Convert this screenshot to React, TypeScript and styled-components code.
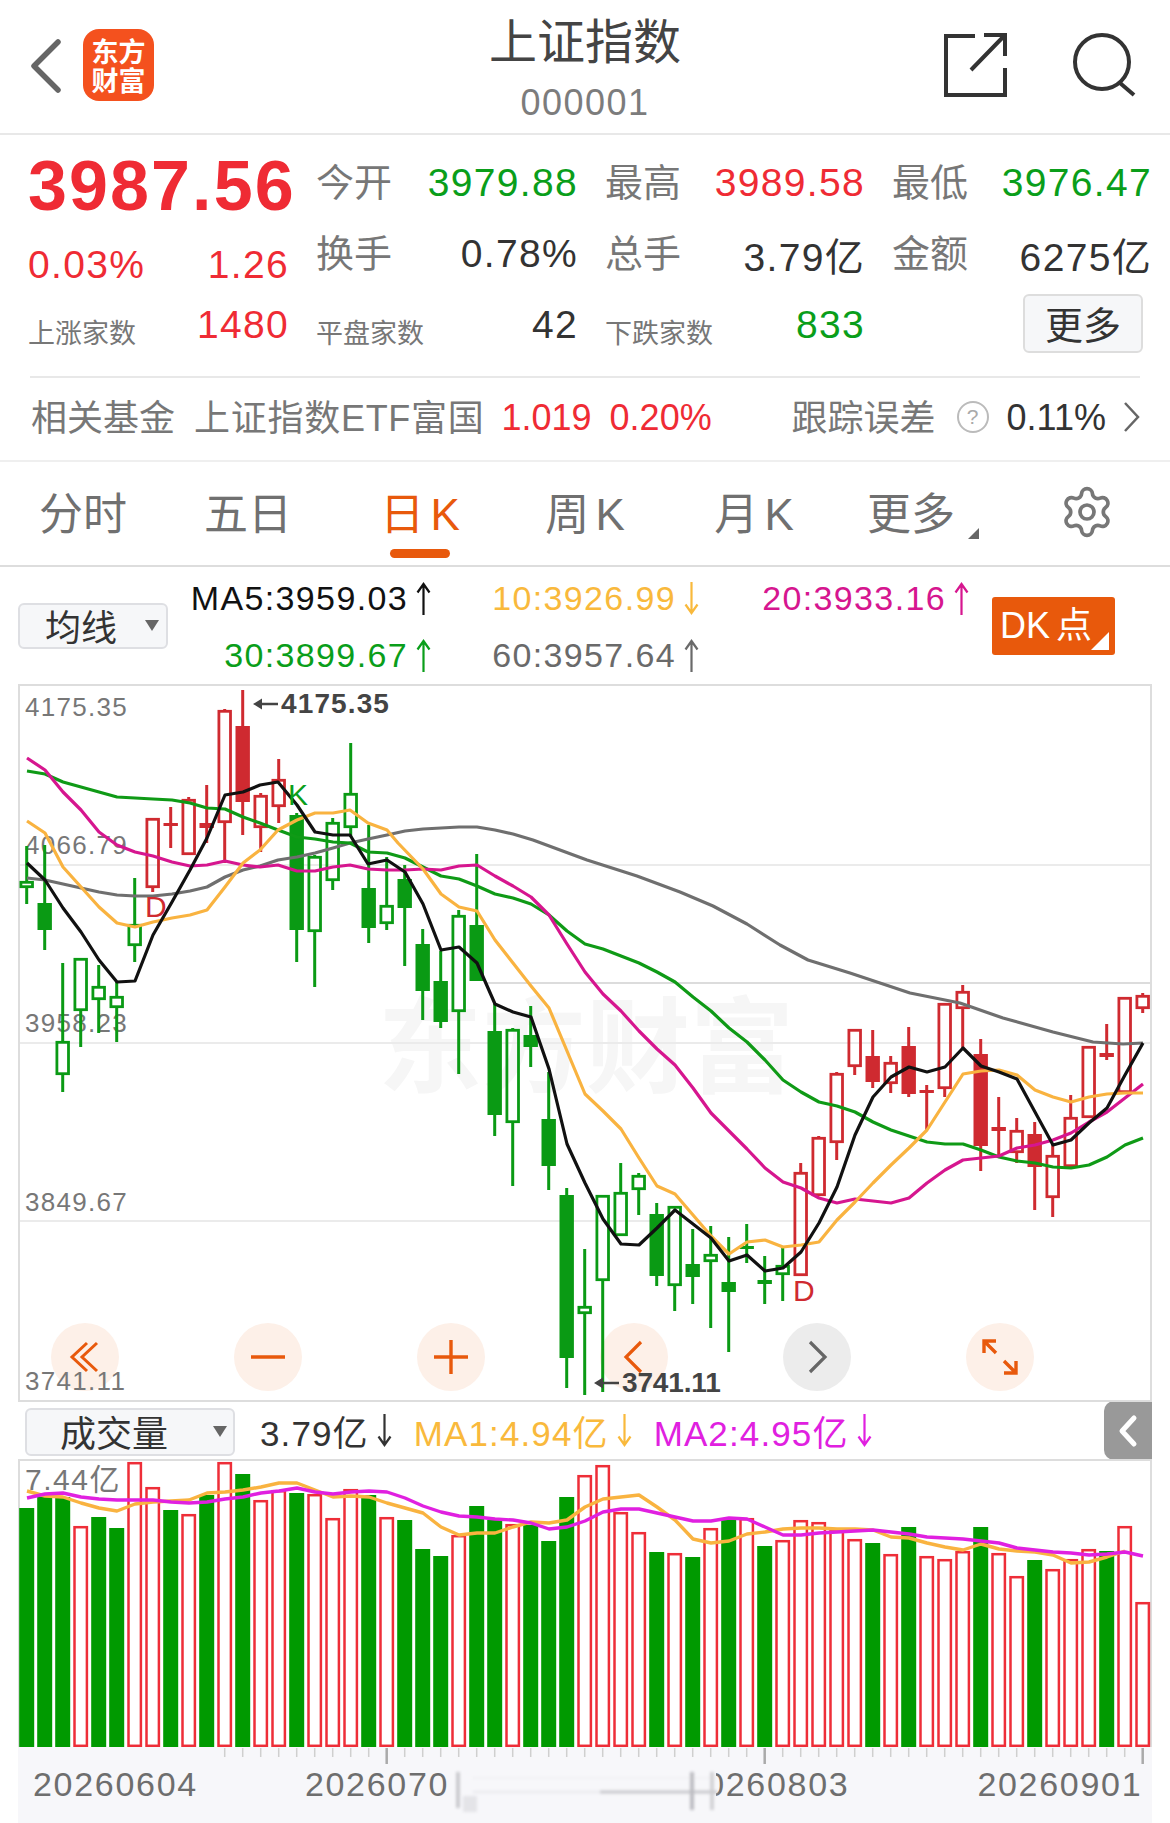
import React from "react";
import styled, { createGlobalStyle } from "styled-components";
import { Settings } from "lucide-react";

const RED = "#ef2b34";
const GREEN = "#0a9e1a";
const ORANGE = "#e8590c";
const FONT = `"Liberation Sans", "Noto Sans CJK SC", sans-serif`;

const Global = createGlobalStyle`
  html, body { margin: 0; padding: 0; background: #fff; }
  body { font-family: ${FONT}; }
  * { box-sizing: border-box; }
`;

const Page = styled.div`
  width: 1170px;
  height: 1823px;
  overflow: hidden;
  background: #fff;
  color: #333;
`;

/* ---------- header ---------- */
const Header = styled.header`
  height: 135px;
  border-bottom: 2px solid #e8e8e8;
  display: grid;
  grid-template-columns: 1fr auto 1fr;
`;
const HeaderLeft = styled.div`
  display: flex;
  align-items: flex-start;
  padding: 29px 0 0 30px;
  gap: 20px;
`;
const BackIcon = styled.svg`
  width: 33px;
  height: 71px;
  display: block;
`;
const Logo = styled.div`
  width: 71px;
  height: 72px;
  border-radius: 16px;
  background: #f4511e;
  color: #fff;
  font-family: "Noto Sans CJK SC", sans-serif;
  font-weight: 700;
  font-size: 27px;
  line-height: 29px;
  text-align: center;
  padding-top: 7px;
`;
const TitleBlock = styled.div`
  text-align: center;
`;
const Title = styled.div`
  font-family: "Noto Sans CJK SC", sans-serif;
  font-size: 48px;
  line-height: 64px;
  margin-top: 6px;
  color: #444;
`;
const Code = styled.div`
  font-size: 36px;
  line-height: 40px;
  margin-top: 13px;
  color: #7c7c7c;
  letter-spacing: 0.04em;
`;
const HeaderRight = styled.div`
  display: flex;
  justify-content: flex-end;
  align-items: flex-start;
  padding: 32px 32px 0 0;
  gap: 64px;
`;
const TopIcon = styled.svg`
  width: 66px;
  height: 66px;
  display: block;
`;

/* ---------- quote ---------- */
const QuoteGrid = styled.section`
  display: grid;
  grid-template-columns: 261px 262px 260px 260px;
  column-gap: 27px;
  grid-template-rows: 66px 76px 66px;
  padding: 15px 0 0 28px;
  height: 241px;
`;
const Cell = styled.div`
  display: flex;
  justify-content: space-between;
  align-items: center;
`;
const OffsetCell = styled(Cell)`
  padding-top: 22px;
`;
const Price = styled.div`
  font-size: 70px;
  font-weight: 700;
  line-height: 68px;
  letter-spacing: 0.03em;
  color: ${RED};
  padding-top: 6px;
  white-space: nowrap;
`;
const Label = styled.span`
  font-family: "Noto Sans CJK SC", sans-serif;
  font-size: 38px;
  color: #777;
  padding-bottom: 8px;
  white-space: nowrap;
`;
const SmallLabel = styled.span`
  font-family: "Noto Sans CJK SC", sans-serif;
  font-size: 27px;
  color: #777;
  padding-top: 12px;
  white-space: nowrap;
`;
const Value = styled.span<{ $tone?: string }>`
  font-size: 39px;
  letter-spacing: 0.034em;
  color: ${(p) => p.$tone || "#333"};
  white-space: nowrap;
`;
const MoreButton = styled.button`
  margin: 0 9px 4px auto;
  width: 120px;
  height: 59px;
  border: 2px solid #ddd;
  border-radius: 6px;
  background: #f6f7f9;
  font-family: "Noto Sans CJK SC", sans-serif;
  font-size: 38px;
  color: #333;
  padding: 0;
  line-height: 1;
`;
const Divider = styled.div`
  height: 2px;
  margin: 0 30px;
  background: #e8e8e8;
`;

/* ---------- fund ---------- */
const FundRow = styled.section`
  height: 84px;
  border-bottom: 2px solid #efefef;
  display: flex;
  align-items: center;
  padding: 0 30px 4px 31px;
`;
const FundText = styled.span<{ $gap?: number; $spread?: boolean }>`
  font-size: 36px;
  margin-left: ${(p) => p.$gap || 0}px;
  letter-spacing: ${(p) => (p.$spread ? "0.02em" : "0")};
  padding-bottom: 4px;
  color: #777;
  white-space: nowrap;
`;
const FundNum = styled.span<{ $gap: number; $tone: string }>`
  font-size: 36px;
  margin-left: ${(p) => p.$gap}px;
  padding-top: 2px;
  color: ${(p) => p.$tone};
  white-space: nowrap;
`;
const Spacer = styled.div`
  flex: 1;
`;
const HelpMark = styled.span`
  margin-left: 21px;
  width: 32px;
  height: 32px;
  border-radius: 50%;
  border: 2px solid #bbb;
  color: #aaa;
  font-size: 21px;
  line-height: 28px;
  text-align: center;
`;
const Chevron = styled.svg`
  display: block;
  margin-left: 17px;
  width: 17px;
  height: 32px;
`;

/* ---------- tabs ---------- */
const Tabs = styled.nav`
  height: 105px;
  border-bottom: 2px solid #ddd;
  display: grid;
  grid-template-columns: 166px 164px 180px 150px 188px 126px 1fr;
`;
const Tab = styled.div<{ $active?: boolean }>`
  display: flex;
  flex-direction: column;
  align-items: center;
  padding-top: 23px;
  font-family: ${FONT};
  font-size: 44px;
  line-height: 60px;
  color: ${(p) => (p.$active ? ORANGE : "#707070")};
  white-space: nowrap;
`;
const TabLabel = styled.span`
  position: relative;
  word-spacing: -6px;
`;
const CornerMark = styled.i<{ $color: string; $size: number; $right: number; $bottom: number }>`
  position: absolute;
  right: ${(p) => p.$right}px;
  bottom: ${(p) => p.$bottom}px;
  width: ${(p) => p.$size}px;
  height: ${(p) => p.$size}px;
  background: ${(p) => p.$color};
  clip-path: polygon(100% 0, 100% 100%, 0 100%);
`;
const Underline = styled.i`
  width: 60px;
  height: 9px;
  border-radius: 5px;
  background: ${ORANGE};
  margin-top: 4px;
`;
const GearCell = styled.div`
  padding: 22px 0 0 85px;
  color: #777;
`;

/* ---------- MA ---------- */
const MaPanel = styled.section`
  height: 117px;
  display: flex;
  align-items: flex-start;
`;
const Select = styled.div<{ $width: number; $height: number; $left: number; $top: number; $size: number; $pad: number; $tri: number }>`
  position: relative;
  width: ${(p) => p.$width}px;
  height: ${(p) => p.$height}px;
  margin: ${(p) => p.$top}px 0 0 ${(p) => p.$left}px;
  padding-left: ${(p) => p.$pad}px;
  border: 2px solid #dedfe3;
  border-radius: 6px;
  background: #f6f7f9;
  font-family: "Noto Sans CJK SC", sans-serif;
  font-size: ${(p) => p.$size}px;
  line-height: ${(p) => p.$height - 6}px;
  color: #333;
  flex: none;
  &::after {
    content: "";
    position: absolute;
    right: ${(p) => p.$tri}px;
    top: 50%;
    margin-top: -6px;
    border-left: 7px solid transparent;
    border-right: 7px solid transparent;
    border-top: 11px solid #666;
  }
`;
const MaGrid = styled.div`
  display: grid;
  grid-template-columns: 263px 268px 270px;
  grid-auto-rows: 57px;
  padding-top: 3px;
`;
const MaItem = styled.div<{ $color: string }>`
  display: flex;
  align-items: center;
  justify-content: flex-end;
  gap: 8px;
  font-size: 34px;
  letter-spacing: 0.04em;
  color: ${(p) => p.$color};
  white-space: nowrap;
`;
const ArrowSvg = styled.svg`
  display: block;
  flex: none;
  width: 15px;
  height: 33px;
`;
const DkButton = styled.div`
  position: relative;
  margin: 30px 0 0 23px;
  width: 123px;
  height: 58px;
  background: ${ORANGE};
  border-radius: 3px;
  color: #fff;
  font-size: 36px;
  line-height: 58px;
  padding-left: 8px;
  white-space: nowrap;
  word-spacing: -4px;
`;

/* ---------- chart ---------- */
const ChartBox = styled.section`
  position: relative;
  margin-left: 18px;
  width: 1134px;
  height: 718px;
  border: 2px solid #ddd;
`;
const ChartSvg = styled.svg`
  position: relative;
  display: block;
  overflow: visible;
`;
const Watermark = styled.div`
  position: absolute;
  left: 358px;
  top: 294px;
  font-family: "Noto Sans CJK SC", sans-serif;
  font-size: 104px;
  font-weight: 700;
  line-height: 120px;
  color: #f6f6f6;
  white-space: nowrap;
`;
const AxisLabel = styled.span<{ $top: number }>`
  position: absolute;
  left: 5px;
  top: ${(p) => p.$top}px;
  font-size: 26px;
  line-height: 30px;
  letter-spacing: 0.05em;
  color: #777;
`;
const Extreme = styled.span<{ $left: number; $top: number; $spacing: string }>`
  position: absolute;
  left: ${(p) => p.$left}px;
  top: ${(p) => p.$top}px;
  display: flex;
  align-items: center;
  gap: 3px;
  font-size: 28px;
  font-weight: 700;
  line-height: 30px;
  letter-spacing: ${(p) => p.$spacing};
  color: #444;
  white-space: nowrap;
`;
const Mark = styled.span<{ $left: number; $top: number; $color: string }>`
  position: absolute;
  left: ${(p) => p.$left}px;
  top: ${(p) => p.$top}px;
  font-size: 30px;
  line-height: 30px;
  color: ${(p) => p.$color};
`;
const Controls = styled.div`
  position: absolute;
  left: 31px;
  top: 637px;
  display: flex;
  gap: 115px;
`;
const Round = styled.div<{ $gray?: boolean }>`
  width: 68px;
  height: 68px;
  border-radius: 50%;
  background: ${(p) => (p.$gray ? "#ececec" : "#fdf0e8")};
  display: flex;
  align-items: center;
  justify-content: center;
`;
const RoundIcon = styled.svg`
  display: block;
  width: 40px;
  height: 40px;
`;
const SmallArrow = styled.svg`
  display: block;
  flex: none;
  width: 25px;
  height: 14px;
`;

/* ---------- volume ---------- */
const VolHeader = styled.section`
  height: 57px;
  margin-right: 18px;
  display: flex;
  align-items: flex-start;
`;
const VolText = styled.div<{ $color: string; $gap: number }>`
  display: flex;
  align-items: center;
  gap: 8px;
  height: 57px;
  margin-left: ${(p) => p.$gap}px;
  font-size: 35px;
  letter-spacing: 0.032em;
  color: ${(p) => p.$color};
  white-space: nowrap;
`;
const Collapse = styled.div`
  margin-left: auto;
  width: 48px;
  height: 59px;
  border-radius: 10px 0 0 10px;
  background: #999;
  margin-top: -1px;
  display: flex;
  align-items: center;
  justify-content: center;
`;
const VolBox = styled.section`
  position: relative;
  margin-left: 18px;
  width: 1134px;
  height: 288px;
  border: 2px solid #ddd;
  border-bottom: 0;
`;
const VolPeak = styled.span`
  position: absolute;
  left: 5px;
  top: 2px;
  font-size: 30px;
  line-height: 34px;
  letter-spacing: 0.05em;
  color: #777;
`;

/* ---------- axis ---------- */
const AxisBar = styled.footer`
  position: relative;
  margin-left: 18px;
  width: 1134px;
  height: 76px;
  background: #f7f7fa;
  padding: 20px 0 0 15px;
  display: flex;
  font-size: 34px;
  line-height: 34px;
  letter-spacing: 0.05em;
  color: #6e6e6e;
`;
const Ticks = styled.svg`
  position: absolute;
  left: 0;
  top: 0;
`;
const DateText = styled.span<{ $gap?: number }>`
  margin-left: ${(p) => p.$gap || 0}px;
  white-space: nowrap;
`;
const Smudge = styled.svg`
  position: absolute;
  left: 0;
  top: 0;
`;

/* ---------- data ---------- */
type C = [number, number, number, number, "g" | "r", 0 | 1];
// wickTop, bodyTop, bodyBottom, wickBottom, colour, solid
const candles: C[] = [
  [846, 881, 888, 904, "g", 0], [845, 903, 930, 950, "g", 1], [963, 1041, 1075, 1092, "g", 0],
  [958, 958, 1011, 1047, "g", 0], [965, 986, 1000, 1033, "g", 0], [982, 996, 1008, 1042, "g", 0],
  [878, 924, 946, 962, "g", 0], [818, 818, 888, 892, "r", 0], [807, 823, 826, 848, "r", 1],
  [797, 799, 855, 855, "r", 0], [785, 823, 828, 843, "r", 1], [709, 710, 823, 863, "r", 0],
  [690, 726, 802, 835, "r", 1], [793, 795, 828, 852, "r", 0], [759, 779, 807, 823, "r", 0],
  [813, 815, 930, 962, "g", 1], [855, 856, 932, 987, "g", 0], [818, 822, 881, 890, "g", 0],
  [743, 793, 828, 837, "g", 0], [825, 888, 928, 943, "g", 1], [857, 905, 924, 930, "g", 0],
  [865, 879, 908, 966, "g", 1], [929, 944, 991, 1020, "g", 1], [951, 981, 1022, 1028, "g", 1],
  [910, 915, 1012, 1074, "g", 0], [854, 925, 981, 981, "g", 1], [1004, 1031, 1115, 1136, "g", 1],
  [1028, 1029, 1123, 1186, "g", 0], [1006, 1035, 1047, 1067, "g", 1], [1072, 1119, 1166, 1190, "g", 1],
  [1188, 1195, 1358, 1388, "g", 1], [1249, 1306, 1314, 1395, "g", 0], [1195, 1195, 1281, 1392, "g", 0],
  [1163, 1192, 1236, 1236, "g", 0], [1173, 1175, 1190, 1215, "g", 0], [1203, 1214, 1276, 1286, "g", 1],
  [1206, 1206, 1286, 1311, "g", 0], [1229, 1264, 1277, 1304, "g", 1], [1226, 1254, 1262, 1328, "g", 0],
  [1237, 1282, 1292, 1352, "g", 1], [1224, 1246, 1249, 1263, "g", 1], [1256, 1280, 1284, 1304, "g", 1],
  [1248, 1265, 1275, 1301, "g", 0], [1163, 1172, 1276, 1276, "r", 0], [1136, 1137, 1196, 1196, "r", 0],
  [1072, 1073, 1143, 1160, "r", 0], [1029, 1029, 1067, 1075, "r", 0], [1030, 1056, 1082, 1088, "r", 1],
  [1056, 1062, 1084, 1093, "r", 0], [1027, 1046, 1094, 1097, "r", 1], [1085, 1090, 1093, 1130, "r", 1],
  [1003, 1003, 1089, 1097, "r", 0], [985, 991, 1009, 1048, "r", 0], [1039, 1054, 1146, 1171, "r", 1],
  [1097, 1127, 1131, 1155, "r", 1], [1118, 1130, 1153, 1163, "r", 0], [1122, 1134, 1167, 1210, "r", 1],
  [1145, 1155, 1198, 1217, "r", 0], [1095, 1117, 1167, 1167, "r", 0], [1046, 1046, 1118, 1118, "r", 0],
  [1024, 1053, 1057, 1060, "r", 1], [997, 997, 1093, 1093, "r", 0], [993, 995, 1009, 1013, "r", 0],
];

const ma5 = "27,863 45,880 63,908 81,932 99,960 117,982 135,981 153,935 172,902 190,870 207,838 225,795 243,792 260,785 278,782 297,805 315,832 333,835 350,835 368,864 387,860 405,872 423,904 441,950 459,947 477,963 495,1004 513,1012 531,1017 549,1069 567,1144 585,1183 603,1219 621,1244 639,1245 657,1228 675,1210 693,1224 711,1238 729,1261 747,1255 765,1271 783,1268 801,1252 819,1223 837,1187 855,1135 873,1097 891,1077 909,1067 927,1072 945,1067 963,1048 981,1066 999,1072 1017,1079 1035,1112 1053,1145 1071,1140 1089,1123 1107,1108 1125,1075 1143,1043";
const ma10 = "27,821 45,833 63,867 81,887 99,907 117,923 135,927 153,922 172,918 190,915 207,910 225,887 243,863 260,850 278,830 297,820 315,813 333,813 350,810 368,823 387,830 398,843 423,869 441,894 459,907 477,911 495,940 513,963 531,986 549,1008 567,1051 585,1094 603,1111 621,1129 639,1158 657,1186 675,1194 693,1215 711,1236 729,1254 747,1242 765,1240 783,1247 801,1245 819,1242 837,1220 855,1202 873,1183 891,1165 909,1148 927,1130 945,1102 963,1074 981,1071 999,1070 1017,1075 1035,1090 1053,1097 1071,1102 1089,1097 1107,1094 1125,1093 1143,1093";
const ma20 = "27,758 45,770 63,792 81,810 99,832 117,845 135,852 153,856 172,862 190,866 207,865 225,861 243,865 260,867 278,865 297,871 315,871 333,867 350,865 368,869 387,870 405,870 423,869 441,870 459,866 477,865 495,876 513,886 531,897 549,915 567,944 585,972 603,994 621,1011 639,1031 657,1049 675,1065 693,1088 711,1113 729,1131 747,1149 765,1168 783,1182 801,1188 819,1198 837,1203 855,1199 873,1201 891,1203 909,1198 927,1183 945,1170 963,1160 981,1158 999,1156 1017,1148 1035,1145 1053,1140 1071,1133 1089,1122 1107,1112 1125,1098 1143,1084";
const ma30 = "27,771 45,774 63,782 81,787 99,792 117,797 135,798 153,799 172,800 190,803 207,808 225,809 243,817 260,823 278,830 297,837 315,839 333,842 350,843 368,852 387,853 405,858 423,867 441,876 459,879 477,886 495,894 513,898 531,904 549,915 567,931 585,944 603,949 621,956 639,963 657,972 675,982 693,997 711,1011 729,1028 747,1042 765,1060 783,1080 801,1092 819,1102 837,1106 855,1112 873,1122 891,1130 909,1136 927,1142 945,1144 963,1144 981,1150 999,1157 1017,1161 1035,1163 1053,1167 1071,1168 1089,1165 1107,1157 1125,1145 1143,1138";
const ma60 = "27,878 45,880 63,884 81,888 99,892 117,895 135,896 153,896 172,894 190,891 207,887 225,877 243,870 260,866 278,860 297,857 315,853 333,848 350,843 368,839 387,835 405,831 423,829 441,828 459,827 477,827 495,830 513,834 533,840 587,860 637,876 680,892 713,906 747,924 780,945 808,960 850,973 910,993 960,1003 1003,1018 1053,1032 1093,1042 1123,1044 1143,1043";

const volumes: [number, "g" | "r"][] = [
  [1508, "g"], [1497, "g"], [1497, "g"], [1526, "r"], [1517, "g"], [1528, "g"], [1462, "r"], [1487, "r"], [1510, "g"], [1514, "r"],
  [1495, "g"], [1462, "r"], [1474, "g"], [1500, "r"], [1490, "r"], [1493, "g"], [1494, "r"], [1518, "r"], [1489, "r"], [1495, "g"],
  [1517, "r"], [1520, "g"], [1549, "g"], [1556, "g"], [1535, "r"], [1506, "g"], [1520, "g"], [1524, "r"], [1525, "g"], [1541, "g"],
  [1497, "g"], [1475, "r"], [1465, "r"], [1512, "r"], [1532, "r"], [1552, "g"], [1553, "r"], [1557, "g"], [1528, "r"], [1520, "g"],
  [1518, "r"], [1546, "g"], [1540, "r"], [1520, "r"], [1522, "r"], [1530, "r"], [1539, "r"], [1543, "g"], [1554, "r"], [1527, "g"],
  [1556, "r"], [1559, "r"], [1551, "r"], [1527, "g"], [1553, "r"], [1576, "r"], [1560, "g"], [1569, "r"], [1559, "r"], [1549, "r"],
  [1551, "g"], [1526, "r"], [1602, "r"],
];
const vma1 = "27,1491 45,1496 63,1497 81,1503 99,1508 117,1511 135,1504 153,1502 171,1501 189,1500 207,1493 225,1492 243,1490 261,1487 279,1483 297,1483 315,1490 333,1497 351,1496 369,1497 387,1503 405,1508 423,1513 441,1527 459,1535 477,1533 495,1533 513,1527 531,1522 549,1523 567,1520 585,1507 603,1499 621,1497 639,1495 657,1507 675,1520 693,1539 711,1543 729,1541 747,1534 765,1532 783,1529 801,1528 819,1528 837,1529 855,1529 873,1530 891,1537 909,1538 927,1543 945,1547 963,1550 981,1544 999,1549 1017,1551 1035,1552 1053,1555 1071,1563 1089,1562 1107,1557 1125,1551";
const vma2 = "27,1498 45,1494 63,1493 81,1497 99,1499 117,1500 135,1500 153,1500 171,1502 189,1503 207,1502 225,1499 243,1497 261,1493 279,1491 297,1488 315,1492 333,1494 351,1492 369,1491 387,1492 405,1498 423,1506 441,1512 459,1516 477,1517 495,1519 513,1520 531,1523 549,1529 567,1527 585,1521 603,1512 621,1509 639,1509 657,1513 675,1517 693,1521 711,1521 729,1518 747,1519 765,1527 783,1535 801,1535 819,1533 837,1532 855,1531 873,1530 891,1532 909,1534 927,1537 945,1538 963,1539 981,1541 999,1543 1017,1548 1035,1550 1053,1552 1071,1553 1089,1555 1107,1554 1125,1552 1143,1556";

const cx = (i: number) => 26.7 + 18 * i;

const Candle: React.FC<{ c: C; i: number }> = ({ c, i }) => {
  const [wt, bt, bb, wb, col, solid] = c;
  const stroke = col === "g" ? "#0a9a14" : "#cf2a30";
  const x = cx(i);
  return (
    <g stroke={stroke}>
      {wt < bt && <line x1={x} x2={x} y1={wt} y2={bt} strokeWidth={3} />}
      {wb > bb && <line x1={x} x2={x} y1={bb} y2={wb} strokeWidth={3} />}
      {solid ? (
        <rect x={x - 7.2} width={14.4} y={bt} height={bb - bt} fill={stroke} stroke="none" />
      ) : (
        <rect x={x - 5.8} width={11.6} y={bt + 1.3} height={Math.max(bb - bt - 2.6, 1)} fill="none" strokeWidth={2.8} />
      )}
    </g>
  );
};

const Arrow: React.FC<{ up?: boolean; color: string }> = ({ up, color }) => (
  <ArrowSvg viewBox="0 0 15 33" fill="none" stroke={color} strokeWidth={2.2}>
    {up ? <path d="M7.5 2V33M1.5 10.5L7.5 2l6 8.5" /> : <path d="M7.5 0V31M1.5 22.5L7.5 31l6-8.5" />}
  </ArrowSvg>
);

const Ma: React.FC<{ text: string; color: string; up?: boolean }> = ({ text, color, up }) => (
  <MaItem $color={color}>
    <span>{text}</span>
    <Arrow up={up} color={color} />
  </MaItem>
);

const VolStat: React.FC<{ text: string; color: string; gap: number }> = ({ text, color, gap }) => (
  <VolText $color={color} $gap={gap}>
    <span>{text}</span>
    <Arrow color={color} />
  </VolText>
);

const ControlIcon: React.FC<{ d: string; color: string; w?: number }> = ({ d, color, w = 3 }) => (
  <RoundIcon viewBox="0 0 40 40" fill="none" stroke={color} strokeWidth={w}>
    <path d={d} />
  </RoundIcon>
);

const LeftArrow: React.FC = () => (
  <SmallArrow viewBox="0 0 25 14">
    <path d="M0 7L9 1.5V5.8H25V8.2H9V12.5Z" fill="#444" />
  </SmallArrow>
);

export default function App() {
  return (
    <Page>
      <Global />
      <Header>
        <HeaderLeft>
          <BackIcon viewBox="0 0 33 71" fill="none" stroke="#666" strokeWidth={5.5} strokeLinecap="round" strokeLinejoin="round">
            <path d="M28 13L4 37l24 24" />
          </BackIcon>
          <Logo>
            东方
            <br />
            财富
          </Logo>
        </HeaderLeft>
        <TitleBlock>
          <Title>上证指数</Title>
          <Code>000001</Code>
        </TitleBlock>
        <HeaderRight>
          <TopIcon viewBox="0 0 66 66" fill="none" stroke="#333" strokeWidth={4}>
            <path d="M33 4H4V63H63V36" />
            <path d="M29 38L63 3M42 3H63V24" />
          </TopIcon>
          <TopIcon viewBox="0 0 66 66" fill="none" stroke="#333" strokeWidth={4}>
            <circle cx="30" cy="30" r="27" />
            <path d="M48 51L62 63" />
          </TopIcon>
        </HeaderRight>
      </Header>

      <QuoteGrid>
        <Cell>
          <Price>3987.56</Price>
        </Cell>
        <Cell>
          <Label>今开</Label>
          <Value $tone={GREEN}>3979.88</Value>
        </Cell>
        <Cell>
          <Label>最高</Label>
          <Value $tone={RED}>3989.58</Value>
        </Cell>
        <Cell>
          <Label>最低</Label>
          <Value $tone={GREEN}>3976.47</Value>
        </Cell>

        <OffsetCell>
          <Value $tone={RED}>0.03%</Value>
          <Value $tone={RED}>1.26</Value>
        </OffsetCell>
        <Cell>
          <Label>换手</Label>
          <Value>0.78%</Value>
        </Cell>
        <Cell>
          <Label>总手</Label>
          <Value>3.79亿</Value>
        </Cell>
        <Cell>
          <Label>金额</Label>
          <Value>6275亿</Value>
        </Cell>

        <Cell>
          <SmallLabel>上涨家数</SmallLabel>
          <Value $tone={RED}>1480</Value>
        </Cell>
        <Cell>
          <SmallLabel>平盘家数</SmallLabel>
          <Value>42</Value>
        </Cell>
        <Cell>
          <SmallLabel>下跌家数</SmallLabel>
          <Value $tone={GREEN}>833</Value>
        </Cell>
        <Cell>
          <MoreButton>更多</MoreButton>
        </Cell>
      </QuoteGrid>
      <Divider />

      <FundRow>
        <FundText>相关基金</FundText>
        <FundText $gap={19} $spread>上证指数ETF富国</FundText>
        <FundNum $gap={17} $tone={RED}>1.019</FundNum>
        <FundNum $gap={18} $tone={RED}>0.20%</FundNum>
        <Spacer />
        <FundText>跟踪误差</FundText>
        <HelpMark>?</HelpMark>
        <FundNum $gap={18} $tone="#333">0.11%</FundNum>
        <Chevron viewBox="0 0 17 32" fill="none" stroke="#666" strokeWidth={2.5}>
          <path d="M2 2l13 14L2 30" />
        </Chevron>
      </FundRow>

      <Tabs>
        <Tab><TabLabel>分时</TabLabel></Tab>
        <Tab><TabLabel>五日</TabLabel></Tab>
        <Tab $active>
          <TabLabel>日 K</TabLabel>
          <Underline />
        </Tab>
        <Tab><TabLabel>周 K</TabLabel></Tab>
        <Tab><TabLabel>月 K</TabLabel></Tab>
        <Tab>
          <TabLabel>
            更多
            <CornerMark $color="#666" $size={11} $right={-24} $bottom={6} />
          </TabLabel>
        </Tab>
        <GearCell>
          <Settings size={56} strokeWidth={1.6} />
        </GearCell>
      </Tabs>

      <MaPanel>
        <Select $width={150} $height={46} $left={18} $top={36} $size={36} $pad={25} $tri={7}>均线</Select>
        <MaGrid>
          <Ma text="MA5:3959.03" color="#111" up />
          <Ma text="10:3926.99" color="#f9b93c" />
          <Ma text="20:3933.16" color="#d6168f" up />
          <Ma text="30:3899.67" color={GREEN} up />
          <Ma text="60:3957.64" color="#6a6a6a" up />
        </MaGrid>
        <DkButton>
          DK 点
          <CornerMark $color="#fff" $size={18} $right={6} $bottom={5} />
        </DkButton>
      </MaPanel>

      <ChartBox>
        <Watermark>东方财富</Watermark>
        <AxisLabel $top={6}>4175.35</AxisLabel>
        <AxisLabel $top={144}>4066.79</AxisLabel>
        <AxisLabel $top={322}>3958.23</AxisLabel>
        <AxisLabel $top={501}>3849.67</AxisLabel>
        <Controls>
          <Round>
            <ControlIcon color={ORANGE} d="M22 6L7 20l15 14M32 6L17 20l15 14" />
          </Round>
          <Round>
            <ControlIcon color={ORANGE} d="M3 20H37" w={3.4} />
          </Round>
          <Round>
            <ControlIcon color={ORANGE} d="M3 20H37M20 3V37" w={3.4} />
          </Round>
          <Round>
            <ControlIcon color={ORANGE} d="M27 5L12 20l15 15" w={3.2} />
          </Round>
          <Round $gray>
            <ControlIcon color="#666" d="M13 5L28 20 13 35" w={3.2} />
          </Round>
          <Round>
            <ControlIcon color={ORANGE} d="M4 16V4H16M4 4L16 16M36 24V36H24M36 36L24 24" w={3.4} />
          </Round>
        </Controls>
        <AxisLabel $top={680}>3741.11</AxisLabel>
        <ChartSvg width={1130} height={714} viewBox="20 686 1130 714">
          <g stroke="#ebebeb" strokeWidth={2}>
            <line x1="20" x2="1150" y1="865" y2="865" />
            <line x1="20" x2="1150" y1="1043" y2="1043" />
            <line x1="20" x2="1150" y1="1221" y2="1221" />
          </g>
          <line x1="487" x2="1150" y1="983" y2="983" stroke="#dcdcdc" strokeWidth={2} />
          {candles.map((c, i) => (
            <Candle key={i} c={c} i={i} />
          ))}
          <g fill="none" strokeWidth={3.2} strokeLinejoin="round">
            <polyline points={ma60} stroke="#6f6f6f" />
            <polyline points={ma30} stroke="#0f9a16" />
            <polyline points={ma20} stroke="#d6168f" />
            <polyline points={ma10} stroke="#f9b340" />
            <polyline points={ma5} stroke="#111" />
          </g>
        </ChartSvg>
        <Extreme $left={233} $top={3} $spacing="0.04em">
          <LeftArrow />
          4175.35
        </Extreme>
        <Extreme $left={574} $top={682} $spacing="-0.005em">
          <LeftArrow />
          3741.11
        </Extreme>
        <Mark $left={125} $top={206} $color="#cf2a30">D</Mark>
        <Mark $left={268} $top={94} $color={GREEN}>K</Mark>
        <Mark $left={773} $top={590} $color="#cf2a30">D</Mark>
      </ChartBox>

      <VolHeader>
        <Select $width={210} $height={48} $left={25} $top={6} $size={36} $pad={33} $tri={6}>成交量</Select>
        <VolStat text="3.79亿" color="#333" gap={25} />
        <VolStat text="MA1:4.94亿" color="#f9b93c" gap={22} />
        <VolStat text="MA2:4.95亿" color="#e020e0" gap={22} />
        <Collapse>
          <svg width="22" height="34" viewBox="0 0 22 34" fill="none" stroke="#fff" strokeWidth={5} strokeLinecap="round" strokeLinejoin="round">
            <path d="M17 4L5 17l12 13" />
          </svg>
        </Collapse>
      </VolHeader>

      <VolBox>
        <VolPeak>7.44亿</VolPeak>
        <ChartSvg width={1130} height={286} viewBox="20 1461 1130 286">
          {volumes.map(([top, col], i) =>
            col === "g" ? (
              <rect key={i} x={cx(i) - 7.5} width={15} y={top} height={1747 - top} fill="#009a00" />
            ) : (
              <rect key={i} x={cx(i) - 6.2} width={12.4} y={top + 1.2} height={1747 - top - 2.4} fill="#fff" stroke="#ee2e38" strokeWidth={2.5} />
            )
          )}
          <g fill="none" strokeWidth={3.4} strokeLinejoin="round">
            <polyline points={vma1} stroke="#f9b340" />
            <polyline points={vma2} stroke="#e020e0" />
          </g>
        </ChartSvg>
      </VolBox>

      <AxisBar>
        <Ticks width={1134} height={20} viewBox="18 1747 1134 20" stroke="#cfcfcf" strokeWidth={1.5}>
          {candles.map((_, i) =>
            i < 11 ? null : (
              <line
                key={i}
                x1={cx(i)}
                x2={cx(i)}
                y1={1748}
                y2={i === 20 || i === 41 || i === 62 ? 1764 : 1757}
                stroke={i === 20 || i === 41 || i === 62 ? "#aaa" : "#cfcfcf"}
                strokeWidth={i === 20 || i === 41 || i === 62 ? 2.5 : 1.5}
              />
            )
          )}
        </Ticks>
        <DateText>20260604</DateText>
        <DateText $gap={107}>2026070</DateText>
        <DateText $gap={256}>0260803</DateText>
        <DateText $gap={128}>20260901</DateText>
        <Smudge width={1134} height={76} viewBox="18 1747 1134 76" fill="none">
          <filter id="smudge" x="-10%" y="-50%" width="120%" height="200%">
            <feGaussianBlur stdDeviation="1.6" />
          </filter>
          <rect x="694" y="1768" width="22" height="34" fill="#f7f7fa" />
          <g filter="url(#smudge)">
            <path d="M458 1772V1808" stroke="#c4c4c8" strokeWidth={3.5} />
            <rect x="463" y="1796" width="14" height="16" fill="#e4e4e8" />
            <path d="M473 1778H717" stroke="#f0f0f3" strokeWidth={2} />
            <path d="M473 1792H600" stroke="#eaeaee" strokeWidth={2.5} />
            <path d="M600 1792H717" stroke="#c8c8cc" strokeWidth={3} />
            <path d="M692 1772V1810" stroke="#bcbcc1" strokeWidth={4} />
            <path d="M712 1772V1810" stroke="#cdcdd1" strokeWidth={3.5} />
          </g>
        </Smudge>
      </AxisBar>
    </Page>
  );
}
